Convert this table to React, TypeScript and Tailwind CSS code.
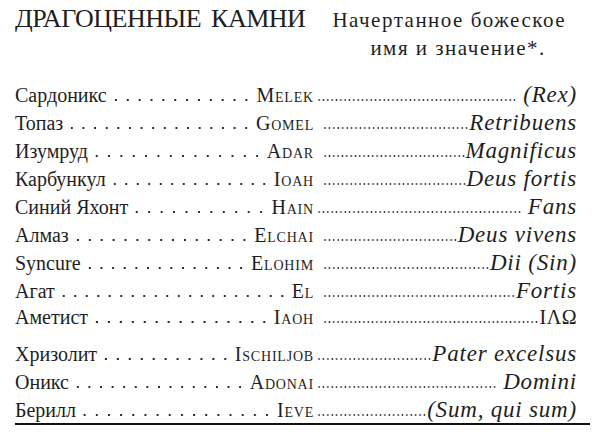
import React from "react"

type Row = {
  name: string
  latin: string
  meaning: string
  upright?: boolean
  gapL?: boolean
  gapR?: boolean
}

const firstGroup: Row[] = [
  { name: "Сардоникс", latin: "Melek", meaning: "(Rex)", gapR: true },
  { name: "Топаз", latin: "Gomel", meaning: "Retribuens", gapL: true },
  { name: "Изумруд", latin: "Adar", meaning: "Magnificus", gapL: true },
  { name: "Карбункул", latin: "Ioah", meaning: "Deus fortis", gapL: true },
  { name: "Синий Яхонт", latin: "Hain", meaning: "Fans", gapR: true },
  { name: "Алмаз", latin: "Elchai", meaning: "Deus vivens", gapL: true },
  { name: "Syncure", latin: "Elohim", meaning: "Dii (Sin)", gapL: true },
  { name: "Агат", latin: "El", meaning: "Fortis", gapL: true },
  { name: "Аметист", latin: "Iaoh", meaning: "IΛΩ", upright: true, gapL: true },
]

const secondGroup: Row[] = [
  { name: "Хризолит", latin: "Ischiljob", meaning: "Pater excelsus" },
  { name: "Оникс", latin: "Adonai", meaning: "Domini", gapR: true },
  { name: "Берилл", latin: "Ieve", meaning: "(Sum, qui sum)" },
]

function StoneRow({ row }: { row: Row }) {
  return (
    <div className="flex h-[28px] items-baseline">
      <div className="flex w-[299px] shrink-0 items-baseline">
        <span className="font-['Liberation_Serif'] text-[20px]">{row.name}</span>
        {/* sparse leader */}
        <div className="ml-[3px] mr-[4px] h-[4px] flex-1 bg-[image:radial-gradient(circle,#2a2a2a_1px,transparent_1.4px)] bg-[length:11.5px_4px] bg-repeat-space" />
        <span className="font-['Liberation_Serif'] text-[20px] tracking-[0.8px] [font-variant:small-caps]">
          {row.latin}
        </span>
      </div>
      {/* dense leader */}
      <div
        className={
          "h-[4px] flex-1 bg-[image:radial-gradient(circle,#333_0.75px,transparent_1.1px)] bg-[length:4.3px_4px] bg-repeat-space " +
          (row.gapL ? "ml-[9px] " : "ml-[3px] ") +
          (row.gapR ? "mr-[6px]" : "mr-0")
        }
      />
      {row.upright ? (
        <span className="font-['Liberation_Serif'] text-[20px] tracking-[0.5px]">{row.meaning}</span>
      ) : (
        <span className="font-['Liberation_Serif'] text-[23px] italic tracking-[0.8px]">{row.meaning}</span>
      )}
    </div>
  )
}

export default function App() {
  return (
    <div className="h-[437px] w-[600px] overflow-hidden bg-white pl-[15px] pr-[10px] pt-[5px] font-['Liberation_Serif'] text-[#1e1e1e]">
      <div className="flex items-baseline">
        <div className="font-['Liberation_Serif'] text-[26px] leading-[28px] tracking-[-0.5px]">
          <span className="font-['Liberation_Serif']">ДРАГОЦЕННЫЕ</span>{" "}
          <span className="ml-[4px] font-['Liberation_Serif']">КАМНИ</span>
        </div>
        <div className="ml-[27px] font-['Liberation_Serif'] text-[21px] leading-[28px] tracking-[1.5px]">
          <div className="font-['Liberation_Serif']">Начертанное божеское</div>
          <div className="pl-[38px] font-['Liberation_Serif']">имя и значение*.</div>
        </div>
      </div>

      <div className="mt-[16px] pr-[13px]">
        {firstGroup.map((r) => (
          <StoneRow key={r.name} row={r} />
        ))}
        <div className="mt-[7px]">
          {secondGroup.map((r) => (
            <StoneRow key={r.name} row={r} />
          ))}
        </div>
      </div>
      <div className="mt-[2px] h-[2px] bg-[#111]" />
    </div>
  )
}
